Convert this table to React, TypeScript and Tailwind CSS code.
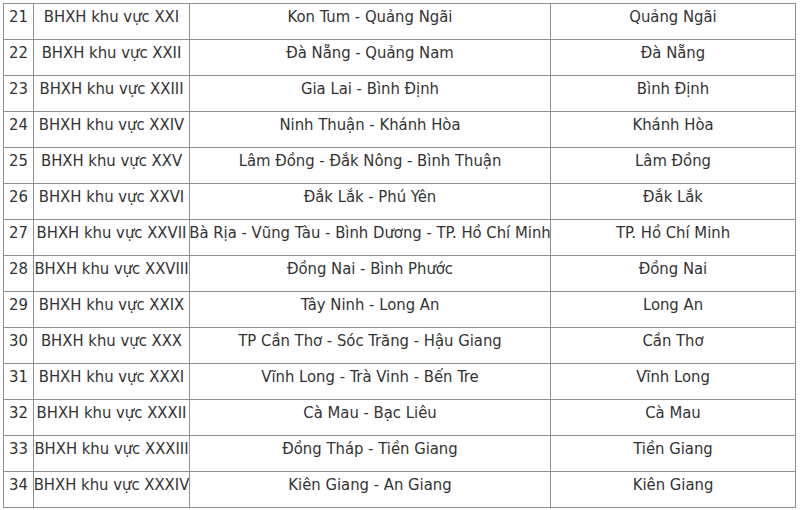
import React from 'react';

type Row = { no: number; name: string; area: string; seat: string };

const rows: Row[] = [
    { no: 21, name: 'BHXH khu vực XXI', area: 'Kon Tum - Quảng Ngãi', seat: 'Quảng Ngãi' },
    { no: 22, name: 'BHXH khu vực XXII', area: 'Đà Nẵng - Quảng Nam', seat: 'Đà Nẵng' },
    { no: 23, name: 'BHXH khu vực XXIII', area: 'Gia Lai - Bình Định', seat: 'Bình Định' },
    { no: 24, name: 'BHXH khu vực XXIV', area: 'Ninh Thuận - Khánh Hòa', seat: 'Khánh Hòa' },
    { no: 25, name: 'BHXH khu vực XXV', area: 'Lâm Đồng - Đắk Nông - Bình Thuận', seat: 'Lâm Đồng' },
    { no: 26, name: 'BHXH khu vực XXVI', area: 'Đắk Lắk - Phú Yên', seat: 'Đắk Lắk' },
    { no: 27, name: 'BHXH khu vực XXVII', area: 'Bà Rịa - Vũng Tàu - Bình Dương - TP. Hồ Chí Minh', seat: 'TP. Hồ Chí Minh' },
    { no: 28, name: 'BHXH khu vực XXVIII', area: 'Đồng Nai - Bình Phước', seat: 'Đồng Nai' },
    { no: 29, name: 'BHXH khu vực XXIX', area: 'Tây Ninh - Long An', seat: 'Long An' },
    { no: 30, name: 'BHXH khu vực XXX', area: 'TP Cần Thơ - Sóc Trăng - Hậu Giang', seat: 'Cần Thơ' },
    { no: 31, name: 'BHXH khu vực XXXI', area: 'Vĩnh Long - Trà Vinh - Bến Tre', seat: 'Vĩnh Long' },
    { no: 32, name: 'BHXH khu vực XXXII', area: 'Cà Mau - Bạc Liêu', seat: 'Cà Mau' },
    { no: 33, name: 'BHXH khu vực XXXIII', area: 'Đồng Tháp - Tiền Giang', seat: 'Tiền Giang' },
    { no: 34, name: 'BHXH khu vực XXXIV', area: 'Kiên Giang - An Giang', seat: 'Kiên Giang' },
];

const cell = 'flex h-9 justify-center overflow-hidden whitespace-nowrap border-r border-b border-[#8f8f8f] pt-[3px] leading-5';

const App: React.FC = () => {
    return (
        <div className="w-[800px] h-[510px] bg-white overflow-hidden pt-[3px] pl-[3px]">
            <div
                className="grid grid-cols-[30px_156px_361px_245px] border-l border-t border-[#8f8f8f] w-[793px] text-[16.5px] text-[#333333]"
                style={{ fontFamily: '"DejaVu Sans Condensed", "Liberation Sans", sans-serif' }}
            >
                {rows.map((r) => (
                    <React.Fragment key={r.no}>
                        <div className={cell}>{r.no}</div>
                        <div className={cell}>{r.name}</div>
                        <div className={cell}>{r.area}</div>
                        <div className={cell}>{r.seat}</div>
                    </React.Fragment>
                ))}
            </div>
        </div>
    );
};

export default App;
